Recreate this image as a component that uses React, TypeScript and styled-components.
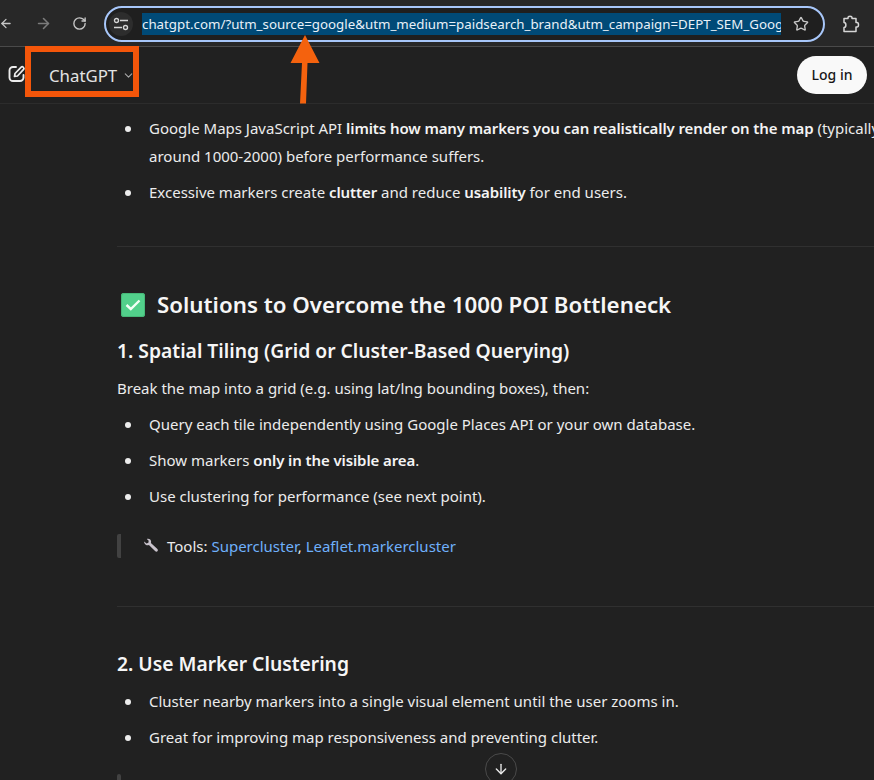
import React from 'react'
import styled, { createGlobalStyle } from 'styled-components'
import { ArrowDown, ArrowLeft, ArrowRight, ChevronDown, RotateCw, Star } from 'lucide-react'

const GlobalStyle = createGlobalStyle`
  html, body {
    margin: 0;
    height: 100%;
    background: #212121;
    overflow: hidden;
  }
  * {
    box-sizing: border-box;
  }
`

const App = () => (
  <Page>
    <GlobalStyle />
    <BrowserBar>
      <BackIcon><ArrowLeft size={17} strokeWidth={2.2} /></BackIcon>
      <ForwardIcon><ArrowRight size={17} strokeWidth={2.2} /></ForwardIcon>
      <ReloadIcon><RotateCw size={15} strokeWidth={2.2} /></ReloadIcon>
      <Omnibox>
        <SiteInfo>
          <svg width="16" height="14" viewBox="0 0 16 14" fill="none" stroke="#d6d6d6" strokeWidth="1.400">
            <circle cx="3.500" cy="3.500" r="2" />
            <path d="M7 3.500H15M1 10.500H9" />
            <circle cx="12.500" cy="10.500" r="2" />
          </svg>
        </SiteInfo>
        <Url>chatgpt.com/?utm_source=google&amp;utm_medium=paidsearch_brand&amp;utm_campaign=DEPT_SEM_Goog</Url>
        <Star size={16} color="#c7c7c7" />
      </Omnibox>
      <Extension>
        <svg width="17" height="18" viewBox="0 0 17 18" fill="none" stroke="#d6d6d6" strokeWidth="1.500" strokeLinejoin="round">
          <path d="M1 3.500H5V2.500C5 .9 9 .9 9 2.500V3.500H13V7.500H14C16 7.500 16 12 14 12H13V16.500H1V12.500C3.500 12.500 3.500 7.500 1 7.500Z" />
        </svg>
      </Extension>
    </BrowserBar>

    <AppHeader>
      <EditIcon>
        <svg width="18" height="18" viewBox="0 0 18 18" fill="none" stroke="#ececec" strokeWidth="1.900" strokeLinecap="round" strokeLinejoin="round">
          <path d="M8 2H5A3.500 3.500 0 0 0 1.500 5.500V12.500A3.500 3.500 0 0 0 5 16H12A3.500 3.500 0 0 0 15.500 12.500V10" />
          <path d="M6.500 11.500 7 8.500 13.200 2.100C14.500 .9 16.800 3 15.600 4.400L9.500 11Z" strokeWidth="1.700" />
        </svg>
      </EditIcon>
      <ModelName>ChatGPT</ModelName>
      <ModelChevron><ChevronDown size={13} /></ModelChevron>
      <LoginButton>Log in</LoginButton>
    </AppHeader>

    <Article>
      <List $top={10}>
        <Item>
          Google Maps JavaScript API <b>limits how many markers you can realistically render on the map</b> (typically
          <br />
          around 1000-2000) before performance suffers.
        </Item>
        <Item>
          Excessive markers create <b>clutter</b> and reduce <b>usability</b> for end users.
        </Item>
      </List>
      <Rule $top={40} />
      <Heading2>
        <CheckEmoji>
          <svg width="16" height="12" viewBox="0 0 16 12">
            <path d="M1.500 6 5.800 10 14.500 1.500" fill="none" stroke="#f2fff6" strokeWidth="2.400" />
          </svg>
        </CheckEmoji>
        Solutions to Overcome the 1000 POI Bottleneck
      </Heading2>
      <Heading3 $top={12}>1. Spatial Tiling (Grid or Cluster-Based Querying)</Heading3>
      <Paragraph>Break the map into a grid (e.g. using lat/lng bounding boxes), then:</Paragraph>
      <List $top={0}>
        <Item>Query each tile independently using Google Places API or your own database.</Item>
        <Item>
          Show markers <b>only in the visible area</b>.
        </Item>
        <Item>Use clustering for performance (see next point).</Item>
      </List>
      <Quote>
        <Wrench>
          <svg width="17" height="16" viewBox="0 0 17 16">
            <path
              d="M1.200 3.600 3.500 5.600 5.400 4.800 5.700 2.700 3.800 1C5.600.4 7.600 1.200 8 3c.2.7.1 1.300-.1 1.900l6.500 6.100c1.500 1.500-.6 3.700-2.100 2.300L5.900 7.100C4.900 7.500 3.700 7.400 2.700 6.700 1.700 6 1 4.800 1.200 3.600Z"
              fill="#c9c3cc"
            />
          </svg>
        </Wrench>
        <span>
          Tools: <Link>Supercluster</Link>, <Link>Leaflet.markercluster</Link>
        </span>
      </Quote>
      <Rule $top={48} />
      <Heading3 $top={41}>2. Use Marker Clustering</Heading3>
      <List $top={7}>
        <Item>Cluster nearby markers into a single visual element until the user zooms in.</Item>
        <Item>Great for improving map responsiveness and preventing clutter.</Item>
      </List>
      <QuoteStub />
    </Article>

    <ScrollDown><ArrowDown size={16} /></ScrollDown>

    <ModelHighlight />
    <UrlPointer width="30" height="69" viewBox="0 0 30 69">
      <path d="M15 0 29.500 28H17.500L16 68.500H10L12 28H.5Z" fill="#f4620e" />
    </UrlPointer>
  </Page>
)

export default App

const Page = styled.div`
  position: relative;
  width: 874px;
  height: 780px;
  overflow: hidden;
  background: #212121;
  color: #ececec;
  font-family: 'Noto Sans', 'Open Sans', sans-serif;
`

const BrowserBar = styled.div`
  display: flex;
  align-items: center;
  height: 47px;
  padding-top: 1px;
  background: #282828;
  border-bottom: 1px solid #4a4a4a;
`

const BackIcon = styled.div`
  display: flex;
  width: 14px;
  margin-left: -1px;
  color: #c7c7c7;
`

const ForwardIcon = styled.div`
  display: flex;
  margin-left: 22px;
  color: #7c7c7c;
`

const ReloadIcon = styled.div`
  display: flex;
  margin-left: 20px;
  color: #c7c7c7;
`

const Omnibox = styled.div`
  display: flex;
  align-items: center;
  width: 721px;
  height: 36px;
  margin-left: 17px;
  padding-left: 3px;
  border: 2px solid #a8c7fa;
  border-radius: 18px;
  background: #1f1f1f;
`

const SiteInfo = styled.div`
  display: flex;
  align-items: center;
  justify-content: center;
  flex: none;
  width: 24px;
  height: 24px;
  margin-right: 9px;
  border-radius: 50%;
  background: #2d2d2d;
`

const Url = styled.div`
  flex: none;
  width: 639px;
  height: 22px;
  margin-right: 12px;
  overflow: hidden;
  background: #004a77;
  color: #e8f1f8;
  font-size: 13.300px;
  line-height: 22px;
  white-space: nowrap;
`

const Extension = styled.div`
  display: flex;
  margin-left: 18px;
`

const AppHeader = styled.header`
  display: flex;
  align-items: center;
  height: 57px;
  padding: 0 7px 0 8px;
  border-bottom: 1px solid #2c2c2c;
`

const EditIcon = styled.div`
  display: flex;
  margin-bottom: 2px;
`

const ModelName = styled.div`
  margin-left: 23px;
  font-size: 16.800px;
  color: #e3e3e3;
`

const ModelChevron = styled.div`
  display: flex;
  margin-left: 5px;
  color: #a8a8a8;
`

const LoginButton = styled.button`
  margin-left: auto;
  width: 70px;
  height: 38px;
  padding: 0 0 2px;
  border: none;
  border-radius: 19px;
  background: #f9f9f9;
  color: #171717;
  font: 500 14px 'Noto Sans', sans-serif;
`

const Article = styled.main`
  padding-left: 117px;
  font-size: 15px;
  line-height: 28px;
  white-space: nowrap;

  b {
    font-weight: 600;
    letter-spacing: -0.1px;
    color: #f4f4f4;
  }
`

const List = styled.ul<{ $top: number }>`
  margin: ${({ $top }) => $top}px 0 0;
  padding: 0 0 0 32px;
  list-style: none;
`

const Item = styled.li`
  position: relative;
  margin-bottom: 8px;

  &::before {
    content: '';
    position: absolute;
    left: -24px;
    top: 12px;
    width: 6px;
    height: 6px;
    border-radius: 50%;
    background: #ececec;
  }
`

const Rule = styled.div<{ $top: number }>`
  height: 1px;
  margin-top: ${({ $top }) => $top}px;
  background: #303030;
`

const Heading2 = styled.h2`
  display: flex;
  align-items: center;
  margin: 40px 0 0;
  font-size: 22.300px;
  font-weight: 600;
  line-height: 36px;
  color: #f6f6f6;
`

const CheckEmoji = styled.span`
  display: flex;
  align-items: center;
  justify-content: center;
  width: 24px;
  height: 24px;
  margin: 0 12px 0 4px;
  border-radius: 3px;
  background: #52d08b;
  box-shadow: inset 0 0 0 1px #46b878;
`

const Heading3 = styled.h3<{ $top: number }>`
  margin: ${({ $top }) => $top}px 0 0;
  font-size: 19.300px;
  font-weight: 600;
  line-height: 32px;
  color: #f6f6f6;
`

const Paragraph = styled.p`
  margin: 7px 0 8px;
`

const Quote = styled.blockquote`
  display: flex;
  align-items: center;
  gap: 5px;
  height: 24px;
  margin: 24px 0 0;
  padding-left: 22px;
  border-left: 4px solid #424242;
  border-radius: 2px;
  white-space: pre;
`

const Wrench = styled.span`
  display: flex;
  margin-right: 2px;
`

const Link = styled.a`
  color: #6fb0fb;
`

const QuoteStub = styled.div`
  width: 4px;
  height: 24px;
  margin-top: 23px;
  border-radius: 2px;
  background: #424242;
`

const ScrollDown = styled.div`
  position: absolute;
  left: 485px;
  top: 753px;
  display: flex;
  align-items: center;
  justify-content: center;
  width: 32px;
  height: 32px;
  border: 1px solid #4a4a4a;
  border-radius: 50%;
  background: #212121;
  color: #ececec;
`

const ModelHighlight = styled.div`
  position: absolute;
  left: 25px;
  top: 46px;
  width: 114px;
  height: 51px;
  border: 6px solid #f4560a;
`

const UrlPointer = styled.svg`
  position: absolute;
  left: 290px;
  top: 35px;
`
